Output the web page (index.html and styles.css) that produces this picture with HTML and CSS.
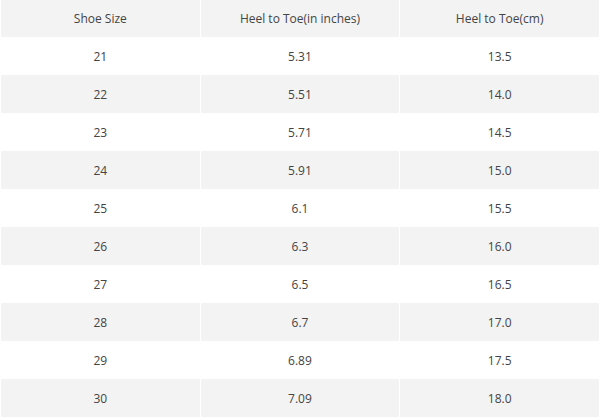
FILE: index.html
```html
<!DOCTYPE html>
<html>
<head>
<meta charset="utf-8">
<link rel="stylesheet" href="styles.css">
</head>
<body>
<table class="size-table">
  <thead>
    <tr><th>Shoe Size</th><th>Heel to Toe(in inches)</th><th>Heel to Toe(cm)</th></tr>
  </thead>
  <tbody>
    <tr><td>21</td><td>5.31</td><td>13.5</td></tr>
    <tr><td>22</td><td>5.51</td><td>14.0</td></tr>
    <tr><td>23</td><td>5.71</td><td>14.5</td></tr>
    <tr><td>24</td><td>5.91</td><td>15.0</td></tr>
    <tr><td>25</td><td>6.1</td><td>15.5</td></tr>
    <tr><td>26</td><td>6.3</td><td>16.0</td></tr>
    <tr><td>27</td><td>6.5</td><td>16.5</td></tr>
    <tr><td>28</td><td>6.7</td><td>17.0</td></tr>
    <tr><td>29</td><td>6.89</td><td>17.5</td></tr>
    <tr><td>30</td><td>7.09</td><td>18.0</td></tr>
  </tbody>
</table>
</body>
</html>
```

FILE: styles.css
```css
html, body {
  margin: 0;
  padding: 0;
  background: #ffffff;
}
.size-table {
  width: 600px;
  border-collapse: collapse;
  table-layout: fixed;
  font-family: "Open Sans", "Liberation Sans", sans-serif;
  font-size: 12px;
  color: #444444;
}
.size-table th,
.size-table td {
  border-left: 1px solid #ffffff;
  border-right: 1px solid #ffffff;
  text-align: center;
  font-weight: normal;
  padding: 0;
}
.size-table th {
  height: 37px;
  background: #f3f3f3;
}
.size-table td {
  height: 38px;
}
.size-table tbody tr:nth-child(even) td {
  background: #f3f3f3;
}
```
